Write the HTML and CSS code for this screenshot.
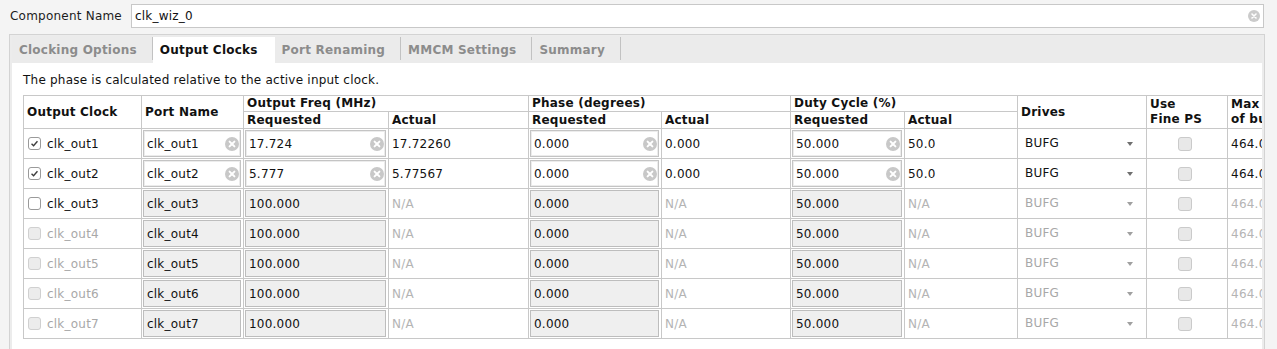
FILE: index.html
```html
<!DOCTYPE html>
<html lang="en">
<head>
  <meta charset="UTF-8" />
  <title>Clocking Wizard</title>
  <link rel="stylesheet" href="styles.css">
</head>
<body>
  <div class="name-row">
    <span class="name-label">Component Name</span>
    <div class="name-field">
      <span>clk_wiz_0</span>
      <svg class="clear-sm" viewBox="0 0 12 12"><circle cx="6" cy="6" r="6" fill="#cbcbcb"/><path d="M4 4l4 4M8 4l-4 4" stroke="#fff" stroke-width="1.6" stroke-linecap="round"/></svg>
    </div>
  </div>

  <div class="panel">
    <div class="tabs">
      <div class="tab">Clocking Options</div>
      <div class="tab active">Output Clocks</div>
      <div class="tab">Port Renaming</div>
      <div class="tab">MMCM Settings</div>
      <div class="tab">Summary</div>
    </div>

    <div class="page">
      <p class="hint">The phase is calculated relative to the active input clock.</p>
      <div class="grid-wrap">
        <table class="clocks">
          <colgroup>
            <col style="width:118px"><col style="width:102px"><col style="width:145px"><col style="width:140px">
            <col style="width:133px"><col style="width:129px"><col style="width:114px"><col style="width:113px">
            <col style="width:129px"><col style="width:81px"><col style="width:100px">
          </colgroup>
          <thead>
            <tr class="h1">
              <th rowspan="2">Output Clock</th>
              <th rowspan="2">Port Name</th>
              <th colspan="2">Output Freq (MHz)</th>
              <th colspan="2">Phase (degrees)</th>
              <th colspan="2">Duty Cycle (%)</th>
              <th rowspan="2">Drives</th>
              <th rowspan="2" class="two">Use<br>Fine PS</th>
              <th rowspan="2" class="two">Max Freq<br>of buffer</th>
            </tr>
            <tr class="h2">
              <th>Requested</th><th>Actual</th>
              <th>Requested</th><th>Actual</th>
              <th>Requested</th><th>Actual</th>
            </tr>
          </thead>
          <tbody>
            <tr>
              <td><span class="cb on"><svg viewBox="0 0 13 13"><path d="M3 6.8l2.4 2.4 4.6-5.4" fill="none" stroke="#3c3c3c" stroke-width="1.6"/></svg></span>clk_out1</td>
              <td class="in"><div class="fld"><span>clk_out1</span><svg class="clr" viewBox="0 0 14 14"><circle cx="7" cy="7" r="7" fill="#c8c8c8"/><path d="M4.6 4.6l4.8 4.8M9.4 4.6l-4.8 4.8" stroke="#fff" stroke-width="2" stroke-linecap="round"/></svg></div></td>
              <td class="in"><div class="fld"><span>17.724</span><svg class="clr" viewBox="0 0 14 14"><circle cx="7" cy="7" r="7" fill="#c8c8c8"/><path d="M4.6 4.6l4.8 4.8M9.4 4.6l-4.8 4.8" stroke="#fff" stroke-width="2" stroke-linecap="round"/></svg></div></td>
              <td>17.72260</td>
              <td class="in"><div class="fld"><span>0.000</span><svg class="clr" viewBox="0 0 14 14"><circle cx="7" cy="7" r="7" fill="#c8c8c8"/><path d="M4.6 4.6l4.8 4.8M9.4 4.6l-4.8 4.8" stroke="#fff" stroke-width="2" stroke-linecap="round"/></svg></div></td>
              <td>0.000</td>
              <td class="in"><div class="fld"><span>50.000</span><svg class="clr" viewBox="0 0 14 14"><circle cx="7" cy="7" r="7" fill="#c8c8c8"/><path d="M4.6 4.6l4.8 4.8M9.4 4.6l-4.8 4.8" stroke="#fff" stroke-width="2" stroke-linecap="round"/></svg></div></td>
              <td>50.0</td>
              <td><div class="drop">BUFG<i class="arrow"></i></div></td>
              <td class="mid"><span class="box"></span></td>
              <td>464.000</td>
            </tr>
            <tr>
              <td><span class="cb on"><svg viewBox="0 0 13 13"><path d="M3 6.8l2.4 2.4 4.6-5.4" fill="none" stroke="#3c3c3c" stroke-width="1.6"/></svg></span>clk_out2</td>
              <td class="in"><div class="fld"><span>clk_out2</span><svg class="clr" viewBox="0 0 14 14"><circle cx="7" cy="7" r="7" fill="#c8c8c8"/><path d="M4.6 4.6l4.8 4.8M9.4 4.6l-4.8 4.8" stroke="#fff" stroke-width="2" stroke-linecap="round"/></svg></div></td>
              <td class="in"><div class="fld"><span>5.777</span><svg class="clr" viewBox="0 0 14 14"><circle cx="7" cy="7" r="7" fill="#c8c8c8"/><path d="M4.6 4.6l4.8 4.8M9.4 4.6l-4.8 4.8" stroke="#fff" stroke-width="2" stroke-linecap="round"/></svg></div></td>
              <td>5.77567</td>
              <td class="in"><div class="fld"><span>0.000</span><svg class="clr" viewBox="0 0 14 14"><circle cx="7" cy="7" r="7" fill="#c8c8c8"/><path d="M4.6 4.6l4.8 4.8M9.4 4.6l-4.8 4.8" stroke="#fff" stroke-width="2" stroke-linecap="round"/></svg></div></td>
              <td>0.000</td>
              <td class="in"><div class="fld"><span>50.000</span><svg class="clr" viewBox="0 0 14 14"><circle cx="7" cy="7" r="7" fill="#c8c8c8"/><path d="M4.6 4.6l4.8 4.8M9.4 4.6l-4.8 4.8" stroke="#fff" stroke-width="2" stroke-linecap="round"/></svg></div></td>
              <td>50.0</td>
              <td><div class="drop">BUFG<i class="arrow"></i></div></td>
              <td class="mid"><span class="box"></span></td>
              <td>464.000</td>
            </tr>
            <tr>
              <td><span class="cb"></span>clk_out3</td>
              <td class="in"><div class="fld off">clk_out3</div></td>
              <td class="in"><div class="fld off">100.000</div></td>
              <td class="na">N/A</td>
              <td class="in"><div class="fld off">0.000</div></td>
              <td class="na">N/A</td>
              <td class="in"><div class="fld off">50.000</div></td>
              <td class="na">N/A</td>
              <td><div class="drop dim">BUFG<i class="arrow"></i></div></td>
              <td class="mid"><span class="box"></span></td>
              <td class="na">464.000</td>
            </tr>
            <tr>
              <td class="dis"><span class="cb dis-cb"></span>clk_out4</td>
              <td class="in"><div class="fld off">clk_out4</div></td>
              <td class="in"><div class="fld off">100.000</div></td>
              <td class="na">N/A</td>
              <td class="in"><div class="fld off">0.000</div></td>
              <td class="na">N/A</td>
              <td class="in"><div class="fld off">50.000</div></td>
              <td class="na">N/A</td>
              <td><div class="drop dim">BUFG<i class="arrow"></i></div></td>
              <td class="mid"><span class="box"></span></td>
              <td class="na">464.000</td>
            </tr>
            <tr>
              <td class="dis"><span class="cb dis-cb"></span>clk_out5</td>
              <td class="in"><div class="fld off">clk_out5</div></td>
              <td class="in"><div class="fld off">100.000</div></td>
              <td class="na">N/A</td>
              <td class="in"><div class="fld off">0.000</div></td>
              <td class="na">N/A</td>
              <td class="in"><div class="fld off">50.000</div></td>
              <td class="na">N/A</td>
              <td><div class="drop dim">BUFG<i class="arrow"></i></div></td>
              <td class="mid"><span class="box"></span></td>
              <td class="na">464.000</td>
            </tr>
            <tr>
              <td class="dis"><span class="cb dis-cb"></span>clk_out6</td>
              <td class="in"><div class="fld off">clk_out6</div></td>
              <td class="in"><div class="fld off">100.000</div></td>
              <td class="na">N/A</td>
              <td class="in"><div class="fld off">0.000</div></td>
              <td class="na">N/A</td>
              <td class="in"><div class="fld off">50.000</div></td>
              <td class="na">N/A</td>
              <td><div class="drop dim">BUFG<i class="arrow"></i></div></td>
              <td class="mid"><span class="box"></span></td>
              <td class="na">464.000</td>
            </tr>
            <tr>
              <td class="dis"><span class="cb dis-cb"></span>clk_out7</td>
              <td class="in"><div class="fld off">clk_out7</div></td>
              <td class="in"><div class="fld off">100.000</div></td>
              <td class="na">N/A</td>
              <td class="in"><div class="fld off">0.000</div></td>
              <td class="na">N/A</td>
              <td class="in"><div class="fld off">50.000</div></td>
              <td class="na">N/A</td>
              <td><div class="drop dim">BUFG<i class="arrow"></i></div></td>
              <td class="mid"><span class="box"></span></td>
              <td class="na">464.000</td>
            </tr>
          </tbody>
        </table>
      </div>
    </div>
  </div>
</body>
</html>
```

FILE: styles.css
```css
body {
  margin: 0;
  height: 349px;
  overflow: hidden;
  background: #f4f4f4;
  font-family: "DejaVu Sans", Verdana, sans-serif;
  font-size: 12px;
  letter-spacing: 0.22px;
  color: #1c1c1c;
}

/* component name */
.name-row {
  display: flex;
  align-items: center;
  padding: 4px 0 0 10px;
}

.name-label {
  width: 121px;
}

.name-field {
  width: 1133px;
  height: 24px;
  box-sizing: border-box;
  border: 1px solid #c8c8c8;
  background: #fff;
  display: flex;
  align-items: center;
  justify-content: space-between;
  padding: 0 3px 0 3px;
  color: #111;
}

.clear-sm {
  width: 12px;
  height: 12px;
}

/* tabbed panel */
.panel {
  margin: 6px 0 0 9px;
  width: 1250px;
  height: 320px;
  padding: 1px 2px 0;
  border: 1px solid #d3d3d3;
  background: #ececec;
}

.tabs {
  display: flex;
  height: 27px;
  background: #ebebeb;
}

.tab {
  position: relative;
  margin-top: 1px;
  height: 26px;
  line-height: 26px;
  padding: 0 16px 0 7px;
  font-weight: bold;
  color: #8c8c8c;
}

.tab::after {
  content: '';
  position: absolute;
  right: 0;
  top: 0;
  width: 1px;
  height: 23px;
  background: #c2c2c2;
}

.tab.active {
  background: #fff;
  color: #111;
  padding-right: 17px;
}

.tab.active::after {
  display: none;
}

.page {
  background: #fff;
  height: 293px;
  padding: 9px 0 0 11px;
  overflow: hidden;
}

.hint {
  margin: 0 0 7px;
  line-height: 16px;
  color: #111;
}

/* clocks table */
.clocks {
  border-collapse: collapse;
  table-layout: fixed;
  width: 1304px;
}

.clocks th,
.clocks td {
  border: 1px solid #c8c8c8;
  padding: 0 3px;
  white-space: nowrap;
  overflow: hidden;
  text-align: left;
  vertical-align: middle;
}

.clocks th {
  font-weight: bold;
  line-height: 15px;
  color: #111;
}

.h1 th {
  height: 15px;
}

.h2 th {
  height: 16px;
}

.clocks th.two {
  line-height: 15px;
}

.clocks td {
  height: 29px;
  color: #111;
}

.clocks td.in {
  padding: 0;
}

.clocks td.na {
  color: #b4b4b4;
}

.clocks td.dis {
  color: #a8a8a8;
}

.clocks td.mid {
  text-align: center;
  padding-right: 8px;
}

.fld {
  height: 27px;
  margin: 1px 2px 1px 1px;
  box-sizing: border-box;
  border: 1px solid #c4c4c4;
  box-shadow: inset 0 0 0 1px #ececec;
  background: #fff;
  display: flex;
  align-items: center;
  justify-content: space-between;
  padding: 0 1px 0 3px;
}

.fld.off {
  background: #efefef;
  border-color: #bdbdbd;
  box-shadow: none;
}

.clr {
  width: 14px;
  height: 14px;
}

.cb {
  display: inline-block;
  width: 13px;
  height: 13px;
  box-sizing: border-box;
  border: 1px solid #9a9a9a;
  border-radius: 3px;
  background: #fff;
  vertical-align: -2px;
  margin: 0 6px 0 1px;
}

.cb svg {
  display: block;
  width: 11px;
  height: 11px;
}

.cb.dis-cb {
  border-color: #d0d0d0;
  background: #ececec;
}

.box {
  display: inline-block;
  width: 14px;
  height: 14px;
  box-sizing: border-box;
  border: 1px solid #cacaca;
  border-radius: 3px;
  background: #e8e8e8;
  vertical-align: middle;
}

.drop {
  display: flex;
  align-items: center;
  justify-content: space-between;
  padding: 0 10px 0 4px;
  margin-top: -2px;
}

.drop.dim {
  color: #a8a8a8;
}

.arrow {
  width: 0;
  height: 0;
  border-left: 3.5px solid transparent;
  border-right: 3.5px solid transparent;
  border-top: 4px solid #6f6f6f;
  margin-top: 2px;
}

.drop.dim .arrow {
  border-top-color: #a0a0a0;
}
```
